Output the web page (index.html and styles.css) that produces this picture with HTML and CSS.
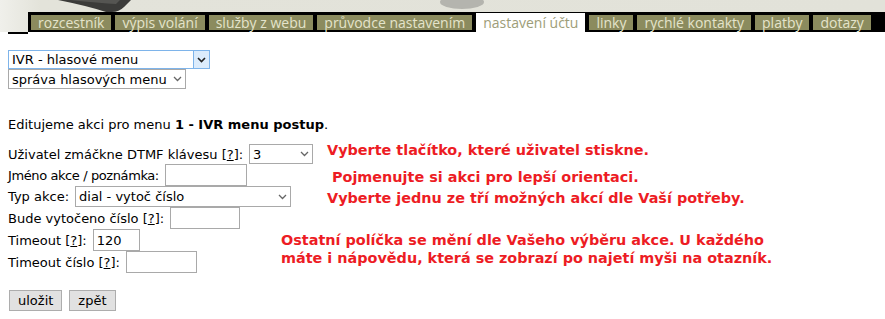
FILE: index.html
```html
<!DOCTYPE html>
<html lang="cs">
<head>
    <meta charset="UTF-8">
    <title>Nastavení účtu - IVR</title>
    <link rel="stylesheet" href="styles.css">
</head>
<body>
    <header class="top">
        <div class="banner">
            <svg width="885" height="12" viewBox="0 0 885 12">
                <path d="M58 0 L131 0 L124 7 Q119 12 112 12 L106 12 Q88 6 58 0 Z" fill="#3b3b39"/>
                <path d="M70 0 L120 0 L116 4 Q100 3 70 0 Z" fill="#555552"/>
                <ellipse cx="462" cy="2" rx="22" ry="7" fill="#b4b4ae"/>
            </svg>
        </div>
        <div class="tabbar">
            <span class="lead"></span>
            <nav class="tabs">
                <a href="#" class="tab">rozcestník</a>
                <a href="#" class="tab">výpis volání</a>
                <a href="#" class="tab">služby z webu</a>
                <a href="#" class="tab">průvodce nastavením</a>
                <a href="#" class="tab active">nastavení účtu</a>
                <a href="#" class="tab">linky</a>
                <a href="#" class="tab">rychlé kontakty</a>
                <a href="#" class="tab">platby</a>
                <a href="#" class="tab">dotazy</a>
            </nav>
        </div>
    </header>

    <main class="content">
        <div class="menu-select main-menu">
            <select class="sel-main">
                <option>IVR - hlasové menu</option>
            </select>
            <span class="arrow-btn">
                <svg width="9" height="6" viewBox="0 0 9 6"><path d="M1 1 L4.5 4.5 L8 1" fill="none" stroke="#222" stroke-width="1.6"/></svg>
            </span>
        </div>
        <div class="menu-select">
            <select class="sel-sub">
                <option>správa hlasových menu</option>
            </select>
            <span class="arrow">
                <svg width="9" height="6" viewBox="0 0 9 6"><path d="M1 1 L4.5 4.5 L8 1" fill="none" stroke="#666" stroke-width="1.3"/></svg>
            </span>
        </div>

        <p class="intro">Editujeme akci pro menu <b>1 - IVR menu postup</b>.</p>

        <form class="action-form">
            <div class="row r-sel">
                <label>Uživatel zmáčkne DTMF klávesu [<a href="#">?</a>]:</label>
                <div class="menu-select">
                    <select class="sel-key"><option>3</option></select>
                    <span class="arrow"><svg width="9" height="6" viewBox="0 0 9 6"><path d="M1 1 L4.5 4.5 L8 1" fill="none" stroke="#666" stroke-width="1.3"/></svg></span>
                </div>
            </div>
            <div class="row">
                <label class="tight">Jméno akce / poznámka:</label>
                <input type="text" class="w82">
            </div>
            <div class="row r-sel2">
                <label>Typ akce:</label>
                <div class="menu-select">
                    <select class="sel-type"><option>dial - vytoč číslo</option></select>
                    <span class="arrow"><svg width="9" height="6" viewBox="0 0 9 6"><path d="M1 1 L4.5 4.5 L8 1" fill="none" stroke="#666" stroke-width="1.3"/></svg></span>
                </div>
            </div>
            <div class="row">
                <label>Bude vytočeno číslo [<a href="#">?</a>]:</label>
                <input type="text" class="w70">
            </div>
            <div class="row">
                <label>Timeout [<a href="#">?</a>]:</label>
                <input type="text" class="w47" value="120">
            </div>
            <div class="row">
                <label>Timeout číslo [<a href="#">?</a>]:</label>
                <input type="text" class="w71">
            </div>

            <div class="buttons">
                <button type="submit">uložit</button>
                <button type="button">zpět</button>
            </div>

            <p class="note n1">Vyberte tlačítko, které uživatel stiskne.</p>
            <p class="note n2">Pojmenujte si akci pro lepší orientaci.</p>
            <p class="note n3">Vyberte jednu ze tří možných akcí dle Vaší potřeby.</p>
            <p class="note n4">Ostatní políčka se mění dle Vašeho výběru akce. U každého<br>máte i nápovědu, která se zobrazí po najetí myši na otazník.</p>
        </form>
    </main>
</body>
</html>
```

FILE: styles.css
```css
body {
    margin: 0;
    font-family: 'DejaVu Sans', Verdana, sans-serif;
    font-size: 13px;
    color: #000;
    background: #fff;
}

/* hlavicka s obrazkem a zalozkami */
.top {
    background: linear-gradient(to right, #f0f0eb 0, #e3e3da 40px, #e2e2d9 100%);
    height: 32px;
}

.banner {
    height: 12px;
    overflow: hidden;
}

.banner svg {
    display: block;
}

.tabbar {
    display: flex;
    align-items: flex-start;
    height: 20px;
}

.lead {
    width: 20px;
    height: 2px;
    margin-left: 8px;
    margin-top: 20px;
    background: #000;
}

.tabs {
    display: flex;
    gap: 4px;
    background: #000;
    padding: 3px 4px 2px 3px;
    flex: 1;
    height: 15px;
}

.tab {
    display: block;
    background: #8b8b5e;
    color: #e4e4cb;
    text-decoration: none;
    font-family: 'Open Sans', sans-serif;
    font-size: 14px;
    line-height: 15px;
    padding: 0 7px;
    text-align: center;
    white-space: nowrap;
}

.tab.active {
    background: #fff;
    color: #9d9d78;
    margin-top: -2px;
    margin-bottom: -2px;
    line-height: 19px;
}

/* obsah */
.content {
    padding: 0 8px;
}

.menu-select {
    position: relative;
    display: inline-block;
    vertical-align: top;
}

.content > .menu-select {
    display: block;
    width: max-content;
}

.main-menu {
    margin-top: 18px;
}

select {
    -webkit-appearance: none;
    appearance: none;
    font-family: 'DejaVu Sans', Verdana, sans-serif;
    font-size: 13px;
    color: #000;
    background: #fff;
    border: 1px solid #a9a9a9;
    border-radius: 0;
    padding: 0 3px;
    margin: 0;
    display: block;
    box-sizing: border-box;
}

.arrow, .arrow-btn {
    position: absolute;
    top: 0;
    right: 0;
    bottom: 0;
    display: flex;
    align-items: center;
    justify-content: center;
    pointer-events: none;
}

.arrow {
    width: 18px;
}

.arrow-btn {
    width: 17px;
    background: #dcecfc;
    border: 1px solid #7eb4ea;
    box-sizing: border-box;
}

.sel-main {
    width: 202px;
    height: 19px;
    border-color: #7eb4ea;
}

.sel-sub {
    width: 178px;
    height: 20px;
}

.intro {
    margin: 28px 0 11px;
    line-height: 16px;
}

.action-form {
    position: relative;
}

.row {
    display: flex;
    align-items: center;
    gap: 6px;
    height: 22px;
}

.row .tight {
    letter-spacing: -0.4px;
}

.r-sel { height: 20px; }
.r-sel2 { height: 21px; }

.row a {
    color: #000;
}

.sel-key {
    width: 64px;
    height: 20px;
}

.sel-type {
    width: 216px;
    height: 21px;
}

input[type="text"] {
    font-family: 'DejaVu Sans', Verdana, sans-serif;
    font-size: 13px;
    height: 22px;
    box-sizing: border-box;
    border: 1px solid #a9a9a9;
    padding: 0 3px;
    margin: 0;
}

.w82 { width: 82px; }
.w70 { width: 70px; }
.w47 { width: 47px; }
.w71 { width: 71px; }

.buttons {
    display: flex;
    gap: 7px;
    margin-top: 17px;
    padding-left: 1px;
}

button {
    font-family: 'DejaVu Sans', Verdana, sans-serif;
    font-size: 13px;
    height: 21px;
    background: #e1e1e1;
    border: 1px solid #adadad;
    padding: 0 8px;
    color: #000;
}

/* cervene poznamky */
.note {
    position: absolute;
    margin: 0;
    color: #ed1c24;
    font-weight: bold;
    font-size: 14.4px;
    line-height: 16px;
    white-space: nowrap;
}

.n1 { top: -2px; left: 319px; }
.n2 { top: 25px; left: 324px; }
.n3 { top: 46px; left: 319px; }
.n4 { top: 87px; left: 273px; line-height: 18px; }
```
